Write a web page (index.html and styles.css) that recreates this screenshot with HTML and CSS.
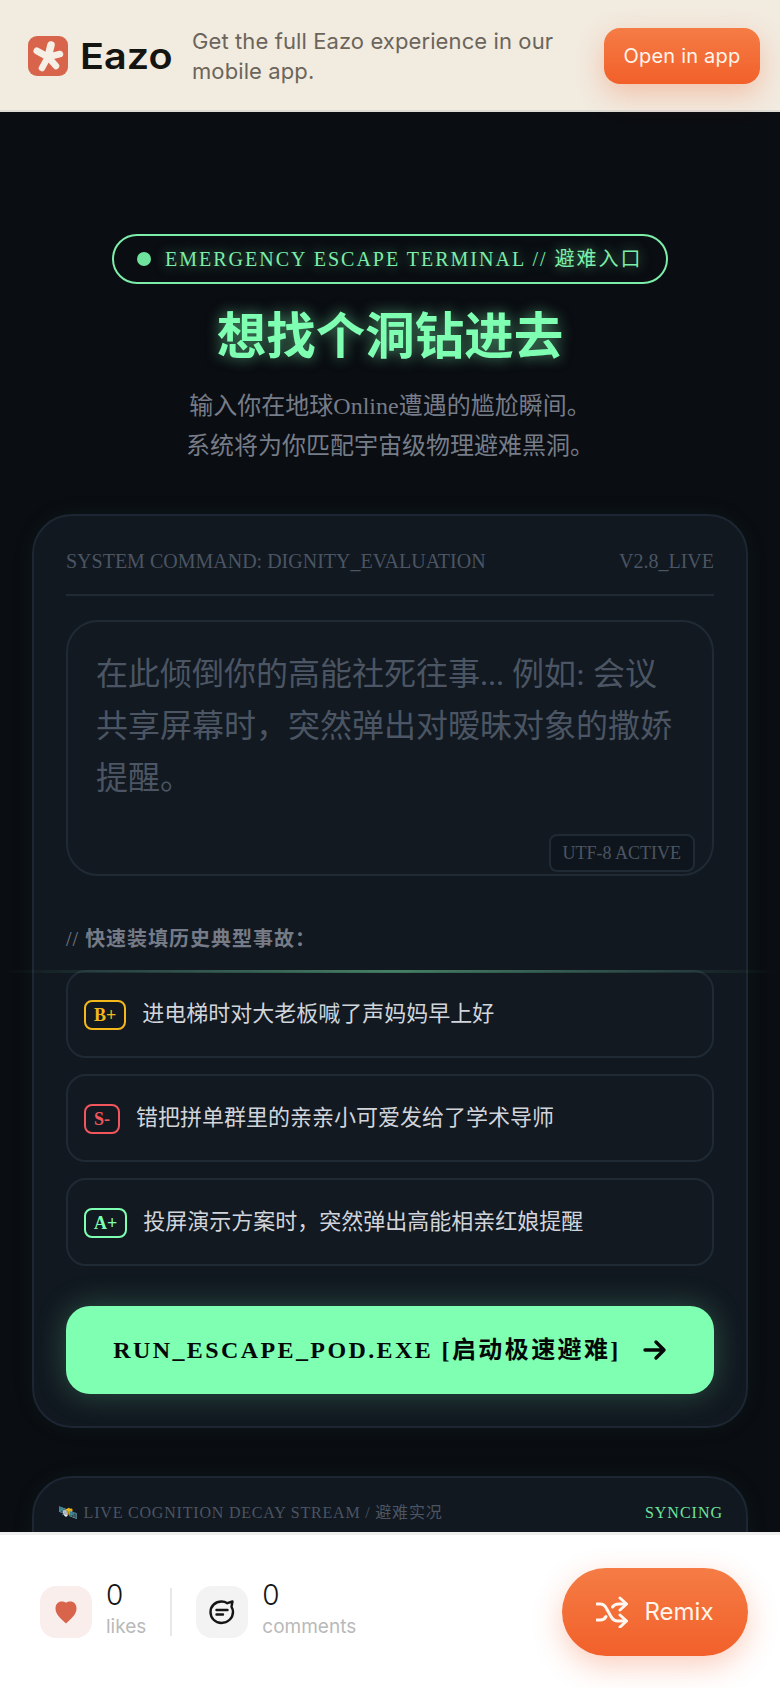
FILE: index.html
```html
<!DOCTYPE html>
<html lang="zh">
<head>
    <meta charset="UTF-8">
    <meta name="viewport" content="width=device-width, initial-scale=1.0">
    <title>想找个洞钻进去 - Eazo</title>
    <link rel="stylesheet" href="styles.css">
</head>
<body>
    <header class="banner">
        <div class="brand">
            <svg class="brand-mark" viewBox="0 0 40 40" aria-hidden="true">
                <rect width="40" height="40" rx="9" fill="#d9644c"/>
                <g stroke="#f6efe6" stroke-linecap="round">
                    <line x1="20" y1="21" x2="23" y2="9" stroke-width="7.500"/>
                    <line x1="20" y1="21" x2="32" y2="18" stroke-width="6.500"/>
                    <line x1="20" y1="21" x2="28" y2="30" stroke-width="6.500"/>
                    <line x1="20" y1="21" x2="14" y2="32" stroke-width="6.500"/>
                    <line x1="20" y1="21" x2="9" y2="15" stroke-width="7"/>
                </g>
            </svg>
            <span class="brand-name">Eazo</span>
        </div>
        <p class="banner-text">Get the full Eazo experience in our mobile app.</p>
        <a class="open-btn">Open in app</a>
    </header>

    <main class="page">
        <section class="hero">
            <div class="status-pill">
                <span class="status-dot"></span>
                <span class="status-text">EMERGENCY ESCAPE TERMINAL // 避难入口</span>
            </div>
            <h1 class="hero-title">想找个洞钻进去</h1>
            <p class="hero-sub">输入你在地球Online遭遇的尴尬瞬间。<br>系统将为你匹配宇宙级物理避难黑洞。</p>
        </section>

        <section class="card">
            <div class="card-head">
                <span>SYSTEM COMMAND: DIGNITY_EVALUATION</span>
                <span>V2.8_LIVE</span>
            </div>
            <div class="input-wrap">
                <textarea class="input" placeholder="在此倾倒你的高能社死往事... 例如: 会议共享屏幕时，突然弹出对暧昧对象的撒娇提醒。"></textarea>
                <span class="input-tag">UTF-8 ACTIVE</span>
            </div>
            <p class="quick-label">// <b>快速装填历史典型事故：</b></p>
            <div class="quick-list">
                <div class="quick-item">
                    <span class="grade grade-b">B+</span>
                    <span class="quick-text">进电梯时对大老板喊了声妈妈早上好</span>
                </div>
                <div class="quick-item">
                    <span class="grade grade-s">S-</span>
                    <span class="quick-text">错把拼单群里的亲亲小可爱发给了学术导师</span>
                </div>
                <div class="quick-item">
                    <span class="grade grade-a">A+</span>
                    <span class="quick-text">投屏演示方案时，突然弹出高能相亲红娘提醒</span>
                </div>
            </div>
            <button class="run-btn" type="button">
                <span class="run-text">RUN_ESCAPE_POD.EXE [启动极速避难]</span>
                <svg class="run-arrow" viewBox="0 0 24 22" aria-hidden="true">
                    <path d="M2 11h19M13 3l8 8-8 8" fill="none" stroke="#050807" stroke-width="3.400" stroke-linecap="round" stroke-linejoin="round"/>
                </svg>
            </button>
        </section>

        <section class="card stream">
            <div class="stream-head">
                <span>🛰️ LIVE COGNITION DECAY STREAM / 避难实况</span>
                <span class="syncing">SYNCING</span>
            </div>
        </section>
    </main>

    <div class="scan-line"></div>

    <footer class="action-bar">
        <div class="stats">
            <div class="stat">
                <span class="stat-icon stat-icon-like">
                    <svg viewBox="0 0 22 24" width="22" height="24" aria-hidden="true">
                        <path d="M11 23.500C6 19 .5 14.500 .5 8.500 .5 4 3.500 1.500 6.500 1.500c1.800 0 3.400 .4 4.500 1.200 1.100-.8 2.700-1.200 4.500-1.200 3 0 6 2.500 6 7 0 6-5.500 10.500-10.500 15z" fill="#d9644c"/>
                    </svg>
                </span>
                <div class="stat-text">
                    <span class="stat-num">0</span>
                    <span class="stat-name">likes</span>
                </div>
            </div>
            <span class="stat-divider"></span>
            <div class="stat">
                <span class="stat-icon">
                    <svg viewBox="0 0 28 28" width="28" height="28" aria-hidden="true">
                        <path d="M13.500 3.500c2.200 0 4.200 .6 5.800 1.700l5.200-1.700-1 5.300c1 1.600 1.500 3.400 1.500 5.200 0 6-5.200 11-11.500 11S2.500 20 2.500 14 7.500 3.500 13.500 3.500z" fill="none" stroke="#151515" stroke-width="2.400" stroke-linejoin="round"/>
                        <path d="M8.500 12h11M8.500 16.500h6.500" stroke="#151515" stroke-width="2.400" stroke-linecap="round"/>
                    </svg>
                </span>
                <div class="stat-text">
                    <span class="stat-num">0</span>
                    <span class="stat-name">comments</span>
                </div>
            </div>
        </div>
        <a class="remix-btn">
            <svg viewBox="0 0 32 32" width="32" height="32" aria-hidden="true">
                <g fill="none" stroke="#fff7f0" stroke-width="3" stroke-linecap="round" stroke-linejoin="round">
                    <path d="M1 8h3c3 0 5 1.500 6.500 4.500l4.500 8c1.500 3 4 4.500 7 4.500h8"/>
                    <path d="M1 24h3c3 0 5-1.500 6-3.500"/>
                    <path d="M16.500 11c1.500-2 3.500-3 6-3h7.500"/>
                    <path d="M24 2l6.500 6-6.500 6"/>
                    <path d="M24 19l6.500 6-6.500 6"/>
                </g>
            </svg>
            <span>Remix</span>
        </a>
    </footer>
</body>
</html>
```

FILE: styles.css
```css
/* page shell */
* {
    box-sizing: border-box;
}
body {
    margin: 0;
    height: 100vh;
    position: relative;
    display: flex;
    flex-direction: column;
    overflow: hidden;
    background-color: #0a0d12;
    font-family: "Liberation Serif", "Noto Sans CJK SC", serif;
}

/* top banner */
.banner {
    position: relative;
    z-index: 2;
    flex: none;
    height: 112px;
    display: flex;
    align-items: center;
    padding: 2px 20px 0 28px;
    background-color: #f2ebe0;
    border-bottom: 2px solid #dedbd5;
    font-family: Inter, sans-serif;
}
.brand {
    display: flex;
    align-items: center;
    gap: 12px;
    margin-right: 20px;
}
.brand-mark {
    width: 40px;
    height: 40px;
}
.brand-name {
    width: 92px;
    font-size: 36px;
    font-weight: 600;
    color: #141410;
    transform: scaleX(1.1);
    transform-origin: left center;
}
.banner-text {
    flex: 1;
    margin: 0;
    font-size: 22px;
    letter-spacing: 0.100px;
    line-height: 30px;
    color: #6b655b;
}
.open-btn {
    flex: none;
    width: 156px;
    height: 56px;
    display: flex;
    align-items: center;
    justify-content: center;
    border-radius: 16px;
    background: linear-gradient(180deg, #f57c45, #f2602a);
    box-shadow: 0 10px 28px rgba(242, 96, 42, 0.3);
    color: #fff5ec;
    font-size: 20px;
    letter-spacing: 0.200px;
}

/* dark page */
.page {
    flex: 1;
    min-height: 0;
    overflow: hidden;
    padding: 122px 32px 0;
}
.hero {
    display: flex;
    flex-direction: column;
    align-items: center;
    text-align: center;
}
.status-pill {
    height: 50px;
    width: 556px;
    display: flex;
    align-items: center;
    gap: 14px;
    padding: 0 23px;
    border: 2px solid #7ceeaa;
    border-radius: 25px;
    color: #7ceeaa;
    font-size: 20px;
    letter-spacing: 2px;
    white-space: nowrap;
    text-shadow: 0 0 12px rgba(127, 255, 178, 0.5);
}
.status-text {
    padding-bottom: 4px;
}
.status-dot {
    flex: none;
    width: 14px;
    height: 14px;
    border-radius: 50%;
    background-color: #6ee39d;
}
.hero-title {
    margin: 22px 0 16px;
    font-size: 49.500px;
    line-height: 64px;
    font-weight: 700;
    color: #7fffb2;
    text-shadow: 0 0 14px rgba(127, 255, 178, 0.55);
}
.hero-sub {
    margin: 0 0 48px;
    font-size: 24px;
    line-height: 40px;
    color: #767c88;
}

/* cards */
.card {
    border: 2px solid #1c2733;
    border-radius: 40px;
    padding: 32px;
    background-color: #111820;
    box-shadow: 0 0 30px rgba(127, 255, 178, 0.04);
}
.card-head {
    display: flex;
    justify-content: space-between;
    height: 48px;
    padding-bottom: 20px;
    border-bottom: 2px solid #1f2a35;
    margin-bottom: 24px;
    font-size: 20px;
    line-height: 26px;
    color: #4b5563;
}
.input-wrap {
    position: relative;
}
.input {
    display: block;
    width: 100%;
    height: 256px;
    padding: 26px 28px;
    border: 2px solid #1f2a35;
    border-radius: 32px;
    background-color: #121921;
    color: #d1d5db;
    font-family: inherit;
    font-size: 32px;
    line-height: 52px;
    resize: none;
    outline: none;
}
.input::placeholder {
    color: #4b5563;
    opacity: 1;
}
.input-tag {
    position: absolute;
    right: 19px;
    bottom: 4px;
    height: 38px;
    padding: 0 12px;
    display: flex;
    align-items: center;
    border: 2px solid #1f2a35;
    border-radius: 8px;
    background-color: #0f151c;
    color: #4b5563;
    font-size: 18px;
}
.quick-label {
    margin: 49px 0 17px;
    font-size: 20px;
    line-height: 28px;
    letter-spacing: 1px;
    color: #757b87;
}
.quick-list {
    display: flex;
    flex-direction: column;
    gap: 16px;
}
.quick-item {
    height: 88px;
    display: flex;
    align-items: center;
    gap: 16px;
    padding: 0 16px;
    border: 2px solid #1f2a35;
    border-radius: 20px;
    background-color: #121921;
    color: #d1d5db;
    font-size: 22px;
}
.quick-text {
    padding-bottom: 6px;
}
.grade {
    flex: none;
    height: 30px;
    margin-top: 2px;
    padding: 0 8px;
    display: flex;
    align-items: center;
    border: 2px solid currentColor;
    border-radius: 8px;
    font-size: 18px;
    font-weight: 700;
}
.grade-b {
    color: #f5b81c;
}
.grade-s {
    color: #f0565c;
}
.grade-a {
    color: #7fffb2;
}
.run-btn {
    width: 100%;
    height: 88px;
    margin-top: 40px;
    display: flex;
    align-items: center;
    justify-content: center;
    gap: 22px;
    border: none;
    border-radius: 24px;
    background-color: #7fffb2;
    box-shadow: 0 0 30px rgba(127, 255, 178, 0.25);
    color: #050807;
    font-family: inherit;
    font-size: 24px;
    font-weight: 700;
    letter-spacing: 2.4px;
}
.run-text {
    padding-bottom: 6px;
}
.run-arrow {
    width: 24px;
    height: 22px;
}

/* live stream */
.stream {
    min-height: 300px;
    margin-top: 48px;
    padding: 25px 23px 24px 24px;
}
.stream-head {
    display: flex;
    justify-content: space-between;
    font-size: 16px;
    line-height: 20px;
    letter-spacing: 0.800px;
    color: #4b5563;
}
.syncing {
    color: #6ee39d;
    letter-spacing: 1px;
}

/* scanning line across the whole page */
.scan-line {
    position: absolute;
    top: 970px;
    left: 0;
    right: 0;
    height: 3px;
    background: linear-gradient(90deg, transparent, rgba(127, 255, 178, 0.4), transparent);
}

/* bottom action bar */
.action-bar {
    position: relative;
    z-index: 2;
    flex: none;
    height: 156px;
    display: flex;
    align-items: center;
    justify-content: space-between;
    padding: 0 32px 0 40px;
    background-color: #fff;
    border-top: 3px solid #eee;
    font-family: Inter, sans-serif;
}
.stats {
    display: flex;
    align-items: center;
}
.stat {
    display: flex;
    align-items: center;
    gap: 14px;
}
.stat-icon {
    width: 52px;
    height: 52px;
    display: flex;
    align-items: center;
    justify-content: center;
    border-radius: 16px;
    background-color: #f3f3f3;
}
.stat-icon-like {
    background-color: #f9eeeb;
}
.stat-text {
    display: flex;
    flex-direction: column;
    padding-bottom: 3px;
}
.stat-num {
    font-size: 28px;
    font-weight: 300;
    line-height: 34px;
    color: #151515;
}
.stat-name {
    font-size: 19px;
    line-height: 30px;
    color: #b9b9b9;
}
.stat-divider {
    width: 2px;
    height: 48px;
    margin: 0 24px;
    background-color: #e8e8e8;
}
.remix-btn {
    width: 186px;
    height: 88px;
    display: flex;
    align-items: center;
    justify-content: center;
    gap: 16px;
    border-radius: 44px;
    background: linear-gradient(180deg, #f57c45, #f2602a);
    box-shadow: 0 10px 30px rgba(242, 96, 42, 0.3);
    color: #fff5ec;
    font-size: 24px;
}
```
